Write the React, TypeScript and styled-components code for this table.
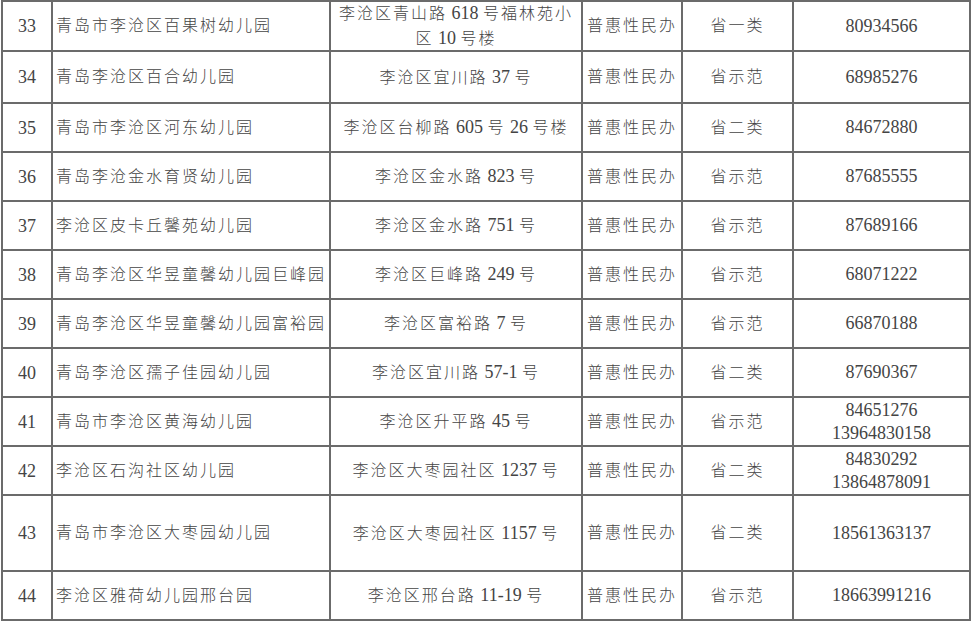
import React from 'react'
import styled, { createGlobalStyle } from 'styled-components'

const GlobalStyle = createGlobalStyle`
    html, body {
        margin: 0;
        padding: 0;
        background: #ffffff;
        overflow: hidden;
    }
`

const COLUMNS = '48px 276px 250px 98px 109px 175px'

const StyledTable = styled.div`
    display: flex;
    flex-direction: column;
    gap: 2px;
    width: 966px;
    margin-left: 1px;
    padding: 2px;
    background-color: #6b6b6b;
    font-family: "Liberation Serif", "Noto Sans CJK SC", serif;
    color: #444444;
`

const StyledRow = styled.div<{ $height: number }>`
    display: grid;
    grid-template-columns: ${COLUMNS};
    column-gap: 2px;
    height: ${(p) => p.$height}px;
`

const Cell = styled.div<{ $align?: 'left' | 'center' }>`
    display: flex;
    flex-direction: column;
    justify-content: center;
    align-items: ${(p) => (p.$align === 'left' ? 'flex-start' : 'center')};
    text-align: ${(p) => p.$align ?? 'center'};
    padding: 0 ${(p) => (p.$align === 'left' ? '3px' : '0')};
    background-color: #ffffff;
    font-size: 16px;
    font-weight: 300;
    letter-spacing: 2px;
    line-height: 24px;
    white-space: nowrap;
    overflow: hidden;
`

// digits are set in the serif at full size, without the CJK tracking
const Num = styled.span`
    font-size: 18px;
    font-weight: 400;
    letter-spacing: 0;
`

const PhoneLine = styled(Num)`
    display: block;
    line-height: 23px;
`

type School = {
    no: number
    name: string
    address: string[]
    kind: string
    level: string
    phones: string[]
    height: number
}

const schools: School[] = [
    { no: 33, name: '青岛市李沧区百果树幼儿园', address: ['李沧区青山路 618 号福林苑小', '区 10 号楼'], kind: '普惠性民办', level: '省一类', phones: ['80934566'], height: 48 },
    { no: 34, name: '青岛李沧区百合幼儿园', address: ['李沧区宜川路 37 号'], kind: '普惠性民办', level: '省示范', phones: ['68985276'], height: 50 },
    { no: 35, name: '青岛市李沧区河东幼儿园', address: ['李沧区台柳路 605 号 26 号楼'], kind: '普惠性民办', level: '省二类', phones: ['84672880'], height: 47 },
    { no: 36, name: '青岛李沧金水育贤幼儿园', address: ['李沧区金水路 823 号'], kind: '普惠性民办', level: '省示范', phones: ['87685555'], height: 47 },
    { no: 37, name: '李沧区皮卡丘馨苑幼儿园', address: ['李沧区金水路 751 号'], kind: '普惠性民办', level: '省示范', phones: ['87689166'], height: 47 },
    { no: 38, name: '青岛李沧区华昱童馨幼儿园巨峰园', address: ['李沧区巨峰路 249 号'], kind: '普惠性民办', level: '省示范', phones: ['68071222'], height: 47 },
    { no: 39, name: '青岛李沧区华昱童馨幼儿园富裕园', address: ['李沧区富裕路 7 号'], kind: '普惠性民办', level: '省示范', phones: ['66870188'], height: 47 },
    { no: 40, name: '青岛李沧区孺子佳园幼儿园', address: ['李沧区宜川路 57-1 号'], kind: '普惠性民办', level: '省二类', phones: ['87690367'], height: 47 },
    { no: 41, name: '青岛市李沧区黄海幼儿园', address: ['李沧区升平路 45 号'], kind: '普惠性民办', level: '省示范', phones: ['84651276', '13964830158'], height: 47 },
    { no: 42, name: '李沧区石沟社区幼儿园', address: ['李沧区大枣园社区 1237 号'], kind: '普惠性民办', level: '省二类', phones: ['84830292', '13864878091'], height: 47 },
    { no: 43, name: '青岛市李沧区大枣园幼儿园', address: ['李沧区大枣园社区 1157 号'], kind: '普惠性民办', level: '省二类', phones: ['18561363137'], height: 74 },
    { no: 44, name: '李沧区雅荷幼儿园邢台园', address: ['李沧区邢台路 11-19 号'], kind: '普惠性民办', level: '省示范', phones: ['18663991216'], height: 47 },
]

// split a line into CJK runs and digit runs, so digits get the serif sizing
const renderMixed = (line: string) =>
    line.split(/(\s*[0-9-]+\s*)/).map((part, i) =>
        /[0-9]/.test(part) ? <Num key={i}>{part}</Num> : <React.Fragment key={i}>{part}</React.Fragment>
    )

export default function App() {
    return (
        <>
            <GlobalStyle />
            <StyledTable>
                {schools.map((s) => (
                    <StyledRow key={s.no} $height={s.height}>
                        <Cell><Num>{s.no}</Num></Cell>
                        <Cell $align="left">{s.name}</Cell>
                        <Cell>
                            {s.address.map((line) => (
                                <span key={line}>{renderMixed(line)}</span>
                            ))}
                        </Cell>
                        <Cell>{s.kind}</Cell>
                        <Cell>{s.level}</Cell>
                        <Cell>
                            {s.phones.map((p) => (
                                <PhoneLine key={p}>{p}</PhoneLine>
                            ))}
                        </Cell>
                    </StyledRow>
                ))}
            </StyledTable>
        </>
    )
}
